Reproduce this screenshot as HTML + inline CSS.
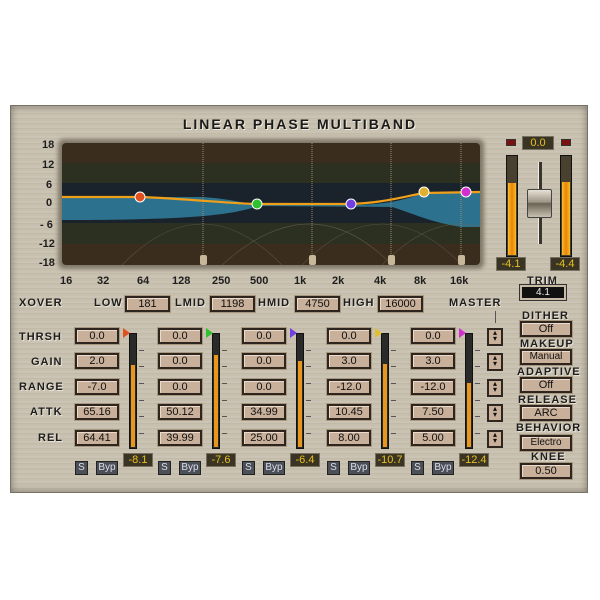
<!DOCTYPE html>
<html><head><style>
*{margin:0;padding:0;box-sizing:border-box}
body{width:600px;height:600px;background:#fff;position:relative;overflow:hidden;font-family:"Liberation Sans",sans-serif}
.a{position:absolute}
#panel{left:10px;top:105px;width:578px;height:388px;background:repeating-linear-gradient(180deg,#cbc3b3 0 2px,#c2baa9 2px 3px,#c8c0af 3px 5px);border:1px solid #7a7262;box-shadow:inset 0 0 8px rgba(0,0,0,.4)}
.lbl{position:absolute;font-size:11px;color:#1e1e1e;font-weight:bold;letter-spacing:1px;text-transform:uppercase;white-space:nowrap;text-shadow:1px 1px 0 #e8e2d6}
.box{position:absolute;height:16px;background:#c9b09a;border:2px solid #2e261e;box-shadow:inset 1px 1px 0 #eadbcc,0 0 0 1px #a8987f;font-size:11px;color:#111;text-align:center;line-height:12px}
.val{position:absolute;width:30px;height:14px;background:#3a3424;border:1px solid #77705f;color:#e8c020;font-size:11px;text-align:center;line-height:12px}
.sb{position:absolute;height:14px;background:#4a5056;border:1px solid #222;color:#dde;font-size:10px;text-align:center;line-height:12px}
.mtr{position:absolute;width:8px;background:#2a2a28;border:1px solid #111}
.mtr i{position:absolute;left:1px;right:1px;bottom:1px;background:#e8961c}
.tick{position:absolute;width:5px;height:1px;background:#555}
.sp{position:absolute;width:16px;height:18px;background:#c9b09a;border:2px solid #2e261e;font-size:8px;line-height:6px;text-align:center;color:#111}
.ax{position:absolute;font-size:11px;color:#1e1e1e;font-weight:bold}
</style></head><body>
<div id="panel" class="a"></div>
<div class="a" style="left:0;top:116px;width:600px;text-align:center;font-size:14px;font-weight:bold;letter-spacing:2px;color:#1a1a1a;text-shadow:1px 1px 0 #f0ebe0">LINEAR PHASE MULTIBAND</div>
<div class="a" style="left:58px;top:139px;width:426px;height:130px;background:#7f7768;border-radius:6px;filter:blur(2px)"></div>
<div class="a" style="left:62px;top:143px;width:418px;height:122px;border-radius:4px;overflow:hidden;background:linear-gradient(180deg,#3a2d1e 0 20px,#2c3021 20px 40px,#1a222c 40px 80px,#2c3021 80px 101px,#3a2d1e 101px)">
<svg width="418" height="122" style="position:absolute;left:0;top:0">
<path d="M0 54 L140 54 C170 56 180 60 198 62 L288 62 C320 62 340 58 362 50 L418 49 L418 84 L400 84 C370 80 350 70 330 64 L196 63 C170 72 130 77 0 77 Z" fill="#2f7a98" opacity=".9"/>
<g stroke="#6a6350" stroke-width=".6" fill="none" opacity=".7"><path d="M60 122 Q140 40 220 122"/><path d="M160 122 Q250 40 330 122"/><path d="M240 122 Q320 40 400 122"/><path d="M320 122 Q400 40 470 122"/></g>
<g stroke="#9a8a6a" stroke-width="1" stroke-dasharray="1 1"><line x1="141" y1="0" x2="141" y2="122"/><line x1="250" y1="0" x2="250" y2="122"/><line x1="329" y1="0" x2="329" y2="122"/><line x1="399" y1="0" x2="399" y2="122"/></g>
<g fill="#c8b89a"><rect x="138" y="112" width="7" height="10" rx="2"/><rect x="247" y="112" width="7" height="10" rx="2"/><rect x="326" y="112" width="7" height="10" rx="2"/><rect x="396" y="112" width="7" height="10" rx="2"/></g>
<path d="M0 54 L78 54 C130 56 160 60 195 61 L288 61 C320 60 340 54 362 50 L418 49" stroke="#f0a018" stroke-width="2.2" fill="none"/>
<g stroke="#fff" stroke-width="1"><circle cx="78" cy="54" r="5" fill="#e05020"/><circle cx="195" cy="61" r="5" fill="#30c030"/><circle cx="289" cy="61" r="5" fill="#7040e0"/><circle cx="362" cy="49" r="5" fill="#e0b030"/><circle cx="404" cy="49" r="5" fill="#d030d0"/></g>
</svg></div>
<div class="ax" style="left:42px;top:139px">18</div><div class="ax" style="left:42px;top:159px">12</div><div class="ax" style="left:46px;top:179px">6</div><div class="ax" style="left:46px;top:197px">0</div><div class="ax" style="left:40px;top:219px">- 6</div><div class="ax" style="left:39px;top:238px">-12</div><div class="ax" style="left:39px;top:257px">-18</div>
<div class="ax" style="left:60px;top:275px">16</div><div class="ax" style="left:97px;top:275px">32</div><div class="ax" style="left:137px;top:275px">64</div><div class="ax" style="left:172px;top:275px">128</div><div class="ax" style="left:212px;top:275px">250</div><div class="ax" style="left:250px;top:275px">500</div><div class="ax" style="left:294px;top:275px">1k</div><div class="ax" style="left:332px;top:275px">2k</div><div class="ax" style="left:374px;top:275px">4k</div><div class="ax" style="left:414px;top:275px">8k</div><div class="ax" style="left:450px;top:275px">16k</div>
<div class="a" style="left:506px;top:139px;width:10px;height:7px;background:#7a1010;border:1px solid #333"></div>
<div class="a" style="left:561px;top:139px;width:10px;height:7px;background:#7a1010;border:1px solid #333"></div>
<div class="val" style="left:522px;top:136px;width:32px">0.0</div>
<div class="a" style="left:506px;top:155px;width:12px;height:102px;background:#4a4030;border:1px solid #111"><div class="a" style="left:1px;right:1px;bottom:1px;top:27px;background:linear-gradient(90deg,#f0c020,#f08010,#f0c020)"></div></div>
<div class="a" style="left:560px;top:155px;width:12px;height:102px;background:#4a4030;border:1px solid #111"><div class="a" style="left:1px;right:1px;bottom:1px;top:26px;background:linear-gradient(90deg,#f0c020,#f08010,#f0c020)"></div></div>
<div class="a" style="left:538px;top:162px;width:4px;height:82px;background:#3a342a;border-left:1px solid #eee"></div>
<div class="a" style="left:527px;top:189px;width:25px;height:29px;background:linear-gradient(180deg,#e8e2d6,#9c9484 45%,#6a6254 50%,#c8c0b0);border:1px solid #444;border-radius:2px"></div>
<div class="val" style="left:496px;top:257px">-4.1</div><div class="val" style="left:550px;top:257px">-4.4</div>
<div class="lbl" style="left:527px;top:275px">TRIM</div>
<div class="a" style="left:520px;top:285px;width:46px;height:15px;background:#111;border:2px solid #c8bba6;outline:1px solid #333;color:#eee;font-size:10px;text-align:center;line-height:11px">4.1</div>
<div class="lbl" style="left:19px;top:297px">XOVER</div>
<div class="lbl" style="left:94px;top:297px">LOW</div><div class="box" style="left:125px;top:296px;width:45px">181</div>
<div class="lbl" style="left:175px;top:297px">LMID</div><div class="box" style="left:210px;top:296px;width:45px">1198</div>
<div class="lbl" style="left:258px;top:297px">HMID</div><div class="box" style="left:295px;top:296px;width:45px">4750</div>
<div class="lbl" style="left:343px;top:297px">HIGH</div><div class="box" style="left:378px;top:296px;width:45px">16000</div>
<div class="lbl" style="left:449px;top:297px">MASTER</div>
<div class="a" style="left:495px;top:311px;width:1px;height:12px;background:#555"></div>
<div class="lbl" style="left:19px;top:331px">THRSH</div><div class="lbl" style="left:31px;top:356px">GAIN</div><div class="lbl" style="left:19px;top:381px">RANGE</div><div class="lbl" style="left:30px;top:406px">ATTK</div><div class="lbl" style="left:38px;top:432px">REL</div>
<div id="bands"></div>
<script>
var d=[[75,["0.0","2.0","-7.0","65.16","64.41"],"-8.1",364,"#e05020"],[158,["0.0","0.0","0.0","50.12","39.99"],"-7.6",354,"#30c030"],[242,["0.0","0.0","0.0","34.99","25.00"],"-6.4",360,"#7040e0"],[327,["0.0","3.0","-12.0","10.45","8.00"],"-10.7",363,"#e0c030"],[411,["0.0","3.0","-12.0","7.50","5.00"],"-12.4",382,"#d030d0"]];
var ys=[328,353,379,404,430],h="";
d.forEach(function(b){var x=b[0];
ys.forEach(function(y,i){h+='<div class="box" style="left:'+x+'px;top:'+y+'px;width:44px">'+b[1][i]+'</div>';});
h+='<div class="mtr" style="left:'+(x+54)+'px;top:333px;height:116px"><i style="top:'+(b[3]-333)+'px"></i></div>';
h+='<div class="a" style="left:'+(x+48)+'px;top:328px;width:0;height:0;border-top:5px solid transparent;border-bottom:5px solid transparent;border-left:7px solid '+b[4]+'"></div>';
[350,366,383,400,416,433].forEach(function(t){h+='<div class="tick" style="left:'+(x+64)+'px;top:'+t+'px"></div>';});
h+='<div class="val" style="left:'+(x+48)+'px;top:453px">'+b[2]+'</div>';
h+='<div class="sb" style="left:'+x+'px;top:461px;width:13px">S</div><div class="sb" style="left:'+(x+21)+'px;top:461px;width:22px">Byp</div>';});
ys.forEach(function(y){h+='<div class="sp" style="left:487px;top:'+y+'px">▴<br>▾</div>';});
document.getElementById('bands').innerHTML=h;
</script>
<div class="lbl" style="left:522px;top:310px">DITHER</div><div class="box" style="left:520px;top:321px;width:52px">Off</div>
<div class="lbl" style="left:520px;top:338px">MAKEUP</div><div class="box" style="left:520px;top:349px;width:52px;font-size:10px">Manual</div>
<div class="lbl" style="left:517px;top:366px">ADAPTIVE</div><div class="box" style="left:520px;top:377px;width:52px">Off</div>
<div class="lbl" style="left:518px;top:394px">RELEASE</div><div class="box" style="left:520px;top:405px;width:52px">ARC</div>
<div class="lbl" style="left:516px;top:422px">BEHAVIOR</div><div class="box" style="left:520px;top:435px;width:52px;font-size:10px">Electro</div>
<div class="lbl" style="left:531px;top:451px">KNEE</div><div class="box" style="left:520px;top:463px;width:52px">0.50</div>
</body></html>
